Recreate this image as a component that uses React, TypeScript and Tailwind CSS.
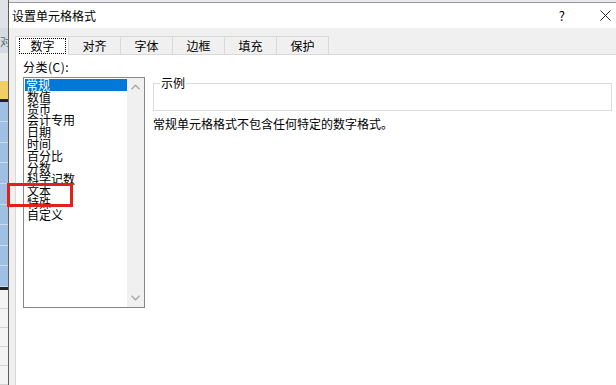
import React from "react"

const FONT = { fontFamily: '"Noto Sans CJK SC", "Microsoft YaHei", sans-serif' }

const TABS = ["数字", "对齐", "字体", "边框", "填充", "保护"]
const CATEGORIES = ["常规", "数值", "货币", "会计专用", "日期", "时间", "百分比", "分数", "科学记数", "文本", "特殊", "自定义"]

function Chevron({ down }: { down?: boolean }) {
    return (
        <svg width="9" height="6" viewBox="0 0 9 6" className="text-[#a6a6a6]">
            <path d={down ? "M0.5 0.8 L4.5 4.8 L8.5 0.8" : "M0.5 5.2 L4.5 1.2 L8.5 5.2"} fill="none" stroke="currentColor" strokeWidth="1.3" />
        </svg>
    )
}

export default function App() {
    return (
        <div className="relative w-[616px] h-[385px] flex overflow-hidden bg-white text-black" style={FONT}>
            {/* excel behind the dialog */}
            <div className="w-[8px] shrink-0 flex flex-col bg-[#e6e6e6]">
                <div className="h-[28px] bg-[#dfe3e8]" />
                <div className="h-[26px] bg-[#d5dbe3] text-[11px] leading-[26px] text-[#5a6b80] overflow-hidden">对</div>
                <div className="h-[28px] bg-[#e9ecef]" />
                <div className="h-[18px] bg-[#f2cf63]" />
                <div className="h-[3px] bg-[#222]" />
                <div className="h-[186px] bg-[#9fc0e3] flex flex-col">
                    {Array.from({ length: 9 }).map((_, i) => (
                        <div key={i} className="h-[20.6px] border-b border-[#c9dcf0]" />
                    ))}
                </div>
                <div className="h-[3px] bg-[#222]" />
                <div className="flex-1 flex flex-col bg-[#f4f4f4]">
                    {Array.from({ length: 5 }).map((_, i) => (
                        <div key={i} className="h-[19px] border-b border-[#d4d4d4]" />
                    ))}
                </div>
            </div>

            {/* dialog */}
            <div className="flex-1 flex flex-col border-l border-[#5b5b5b] bg-[#f0f0f0]">
                <div className="h-[3px] bg-[#e8eaed] border-b border-[#9a9a9a]" />
                <div className="h-[25px] bg-white flex items-center justify-between pl-[3px] pr-[5px]">
                    <span className="text-[12px] leading-none">设置单元格格式</span>
                    <div className="flex items-center gap-[35px] text-[13px]">
                        <span>?</span>
                        <svg width="11" height="11" viewBox="0 0 11 11">
                            <path d="M0.5 0.5 L10.5 10.5 M10.5 0.5 L0.5 10.5" stroke="#222" strokeWidth="1" />
                        </svg>
                    </div>
                </div>

                <div className="flex-1 flex flex-col pl-[6px] pt-[7px]">
                    {/* tabs */}
                    <div className="flex h-[19px] items-end text-[12px]">
                        {TABS.map((t, i) => (
                            <div
                                key={t}
                                className={
                                    i === 0
                                        ? "h-[19px] w-[54px] -mb-px z-10 bg-white border border-b-0 border-[#d9d9d9] flex items-center justify-center pl-[1px]"
                                        : "h-[18px] w-[53px] -ml-px bg-[#f0f0f0] border border-b-0 border-[#d9d9d9] flex items-center justify-center"
                                }
                            >
                                {i === 0 ? (
                                    <span className="border border-dotted border-black px-[10px] h-[16px] leading-[14px]">{t}</span>
                                ) : (
                                    <span className="leading-none">{t}</span>
                                )}
                            </div>
                        ))}
                    </div>

                    {/* panel */}
                    <div className="flex-1 bg-white border-t border-l border-[#d9d9d9] pl-[7px] pt-[6px]">
                        <div className="text-[12px] leading-[12px] tracking-[0.5px]">分类(C):</div>
                        <div className="flex gap-[8px] mt-[4px]">
                            {/* list box */}
                            <div className="w-[122px] h-[231px] border border-[#828790] flex">
                                <div className="flex-1 pt-[1px] pl-[1px]">
                                    {CATEGORIES.map((c, i) => (
                                        <div
                                            key={c}
                                            className={
                                                i === 0
                                                    ? "h-[11.8px] leading-[11.8px] text-[12px] pl-[1px] bg-[#0078d7] text-white"
                                                    : "h-[11.8px] leading-[11.8px] text-[12px] pl-[2px]"
                                            }
                                        >
                                            {c}
                                        </div>
                                    ))}
                                </div>
                                <div className="w-[17px] bg-[#f0f0f0] flex flex-col justify-between items-center py-[6px]">
                                    <Chevron />
                                    <Chevron down />
                                </div>
                            </div>

                            {/* right side */}
                            <div className="flex-1 flex flex-col pr-[4px]">
                                <div className="relative mt-[6px] h-[28px] border border-[#dcdcdc]">
                                    <span className="absolute -top-[8px] left-[6px] bg-white px-[1px] text-[12px] leading-[14px]">示例</span>
                                </div>
                                <div className="mt-[6px] text-[12px] leading-[14px]">常规单元格格式不包含任何特定的数字格式。</div>
                            </div>
                        </div>
                    </div>
                </div>
            </div>

            {/* red annotation */}
            <div className="absolute left-[7px] top-[183px] w-[66px] h-[24px] border-[3px] border-[#e3211c]" />
        </div>
    )
}
